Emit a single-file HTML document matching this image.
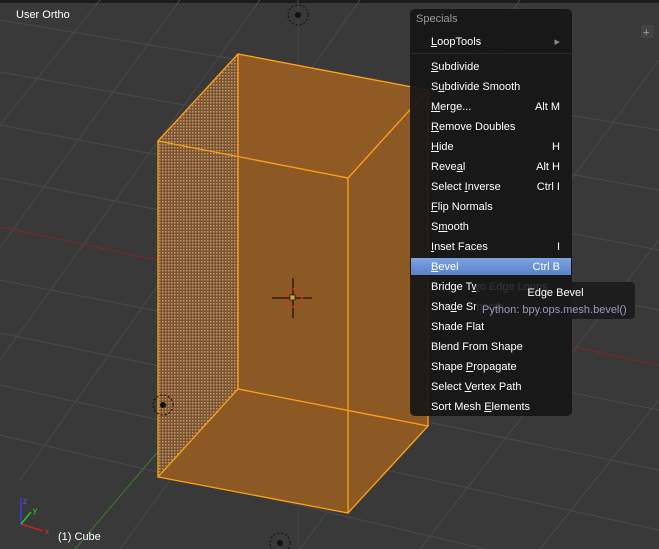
<!DOCTYPE html>
<html><head><meta charset="utf-8"><style>
html,body{margin:0;padding:0;width:659px;height:549px;overflow:hidden;background:#393939;font-family:"Liberation Sans","DejaVu Sans",sans-serif;position:relative}
svg{position:absolute;left:0;top:0;display:block}
.menu{position:absolute;left:410px;top:9px;width:162px;height:407px;background:rgba(22,22,22,0.93);border-radius:5px;overflow:hidden}
.it{position:absolute;left:21px;width:135px;font-size:11px;color:#fff;height:20px;line-height:20px;}
.it span{position:absolute;right:6px;top:0}
.title{position:absolute;left:6px;top:4px;font-size:11px;color:#9a9a9a}
.hl{position:absolute;left:1px;width:160px;top:249px;height:17px;background:linear-gradient(#7ea3e3,#5a82c9);}
.tip{position:absolute;left:476px;top:282px;width:159px;height:37px;background:rgba(25,25,25,0.88);border-radius:4px;}
.lbl{position:absolute;font-size:11px;color:#fff;line-height:13px}
u{text-decoration:underline}
</style></head><body>
<svg width="659" height="549" viewBox="0 0 659 549">
<rect x="0" y="0" width="659" height="3" fill="#1c1c1c"/>
<g stroke="#4a4a4a" stroke-width="1" fill="none">
<line x1="0" y1="20" x2="659" y2="130"/>
<line x1="0" y1="72" x2="659" y2="190"/>
<line x1="0" y1="125" x2="659" y2="250"/>
<line x1="0" y1="178" x2="659" y2="310"/>
<line x1="0" y1="280" x2="659" y2="410"/>
<line x1="0" y1="333" x2="659" y2="470"/>
<line x1="0" y1="385" x2="659" y2="530"/>
<line x1="0" y1="435" x2="659" y2="590"/>
<line x1="100" y1="0" x2="-100" y2="250"/>
<line x1="180" y1="0" x2="-60" y2="330"/>
<line x1="260" y1="0" x2="0" y2="360"/>
<line x1="360" y1="0" x2="20" y2="480"/>
<line x1="520" y1="0" x2="120" y2="549"/>
<line x1="659" y1="60" x2="300" y2="549"/>
<line x1="659" y1="240" x2="420" y2="549"/>
<line x1="659" y1="400" x2="540" y2="549"/>
<line x1="298" y1="0" x2="298" y2="549" stroke="#444"/>
</g>
<line x1="0" y1="227" x2="659" y2="365" stroke="#7a2a2a" stroke-width="1"/>
<line x1="75" y1="549" x2="500" y2="50" stroke="#3f7a2a" stroke-width="1"/>
<defs><pattern id="dots" width="3" height="3" patternUnits="userSpaceOnUse"><rect width="3" height="3" fill="#7a5530"/><rect width="1.5" height="1.5" fill="#c09670"/></pattern></defs>
<polygon points="238,54 428,90 428,426 238,389" fill="#7f5126"/>
<polygon points="158,141 238,54 428,90 348,178" fill="#8f5a24"/>
<polygon points="158,477 238,389 428,426 348,513" fill="#8f5a24"/>
<polygon points="158,141 348,178 348,513 158,477" fill="#8c5823"/>
<polygon points="348,178 428,90 428,426 348,513" fill="#8c5823"/>
<polygon points="158,141 238,54 238,389 158,477" fill="url(#dots)"/>
<g stroke="#ffa21a" stroke-width="1.3" fill="none">
<polygon points="158,141 238,54 428,90 348,178"/>
<polygon points="158,477 238,389 428,426 348,513"/>
<line x1="158" y1="141" x2="158" y2="477"/><line x1="238" y1="54" x2="238" y2="389"/>
<line x1="348" y1="178" x2="348" y2="513"/><line x1="428" y1="90" x2="428" y2="426"/>
</g>
<g stroke="#000" stroke-width="1"><line x1="272" y1="298" x2="312" y2="298"/><line x1="293" y1="278" x2="293" y2="318"/></g>
<circle cx="293" cy="298" r="9" fill="none" stroke="#d33" stroke-width="1.5" stroke-dasharray="3 3"/>
<rect x="290" y="295" width="5" height="5" fill="#e8a030" stroke="#000" stroke-width="0.6"/>
<g fill="none" stroke="#111" stroke-dasharray="2 2"><circle cx="298" cy="15" r="10"/><circle cx="163" cy="405" r="10"/><circle cx="280" cy="543" r="10"/></g>
<circle cx="298" cy="15" r="3" fill="#111"/><circle cx="163" cy="405" r="3" fill="#111"/><circle cx="280" cy="543" r="3" fill="#111"/>
<line x1="21" y1="524" x2="21" y2="498" stroke="#3a3ae0" stroke-width="1.5"/>
<line x1="21" y1="524" x2="43" y2="531" stroke="#d02020" stroke-width="1.5"/>
<line x1="21" y1="524" x2="31" y2="512" stroke="#2ac02a" stroke-width="1.5"/>
<text x="23" y="504" font-size="8" fill="#5555ff" font-family="Liberation Sans">z</text>
<text x="33" y="513" font-size="8" fill="#3ad03a" font-family="Liberation Sans">y</text>
<text x="45" y="534" font-size="8" fill="#e03030" font-family="Liberation Sans">x</text>
<rect x="641" y="25" width="13" height="13" rx="2" fill="#444"/>
<text x="643" y="36" font-size="11" fill="#aaa" font-family="Liberation Sans">+</text>
</svg>
<div class="lbl" style="left:16px;top:9px">User Ortho</div>
<div class="lbl" style="left:58px;top:531px">(1) Cube</div>
<div class="menu">
<div class="title">Specials</div>
<div class="it" style="top:23px"><u>L</u>oopTools<span style="color:#888">▸</span></div>
<div style="position:absolute;left:1px;right:1px;top:44px;height:1px;background:#2a2a2a"></div>
<div class="hl"></div>
<div class="it" style="top:48px"><u>S</u>ubdivide</div>
<div class="it" style="top:68px">S<u>u</u>bdivide Smooth</div>
<div class="it" style="top:88px"><u>M</u>erge...<span>Alt M</span></div>
<div class="it" style="top:108px"><u>R</u>emove Doubles</div>
<div class="it" style="top:128px"><u>H</u>ide<span>H</span></div>
<div class="it" style="top:148px">Reve<u>a</u>l<span>Alt H</span></div>
<div class="it" style="top:168px">Select <u>I</u>nverse<span>Ctrl I</span></div>
<div class="it" style="top:188px"><u>F</u>lip Normals</div>
<div class="it" style="top:208px">S<u>m</u>ooth</div>
<div class="it" style="top:228px"><u>I</u>nset Faces<span>I</span></div>
<div class="it" style="top:248px"><u>B</u>evel<span>Ctrl B</span></div>
<div class="it" style="top:268px">Bridge T<u>w</u>o Edge Loops</div>
<div class="it" style="top:288px">Sha<u>d</u>e Smooth</div>
<div class="it" style="top:308px">Shade Flat</div>
<div class="it" style="top:328px">Blend From Shape</div>
<div class="it" style="top:348px">Shape <u>P</u>ropagate</div>
<div class="it" style="top:368px">Select <u>V</u>ertex Path</div>
<div class="it" style="top:388px">Sort Mesh <u>E</u>lements</div>
</div>
<div class="tip">
<div style="position:absolute;left:0;right:0;top:5px;text-align:center;font-size:11px;color:#fff">Edge Bevel</div>
<div style="position:absolute;left:6px;top:22px;font-size:11px;color:#9a9ac0">Python: bpy.ops.mesh.bevel()</div>
</div>
</body></html>
